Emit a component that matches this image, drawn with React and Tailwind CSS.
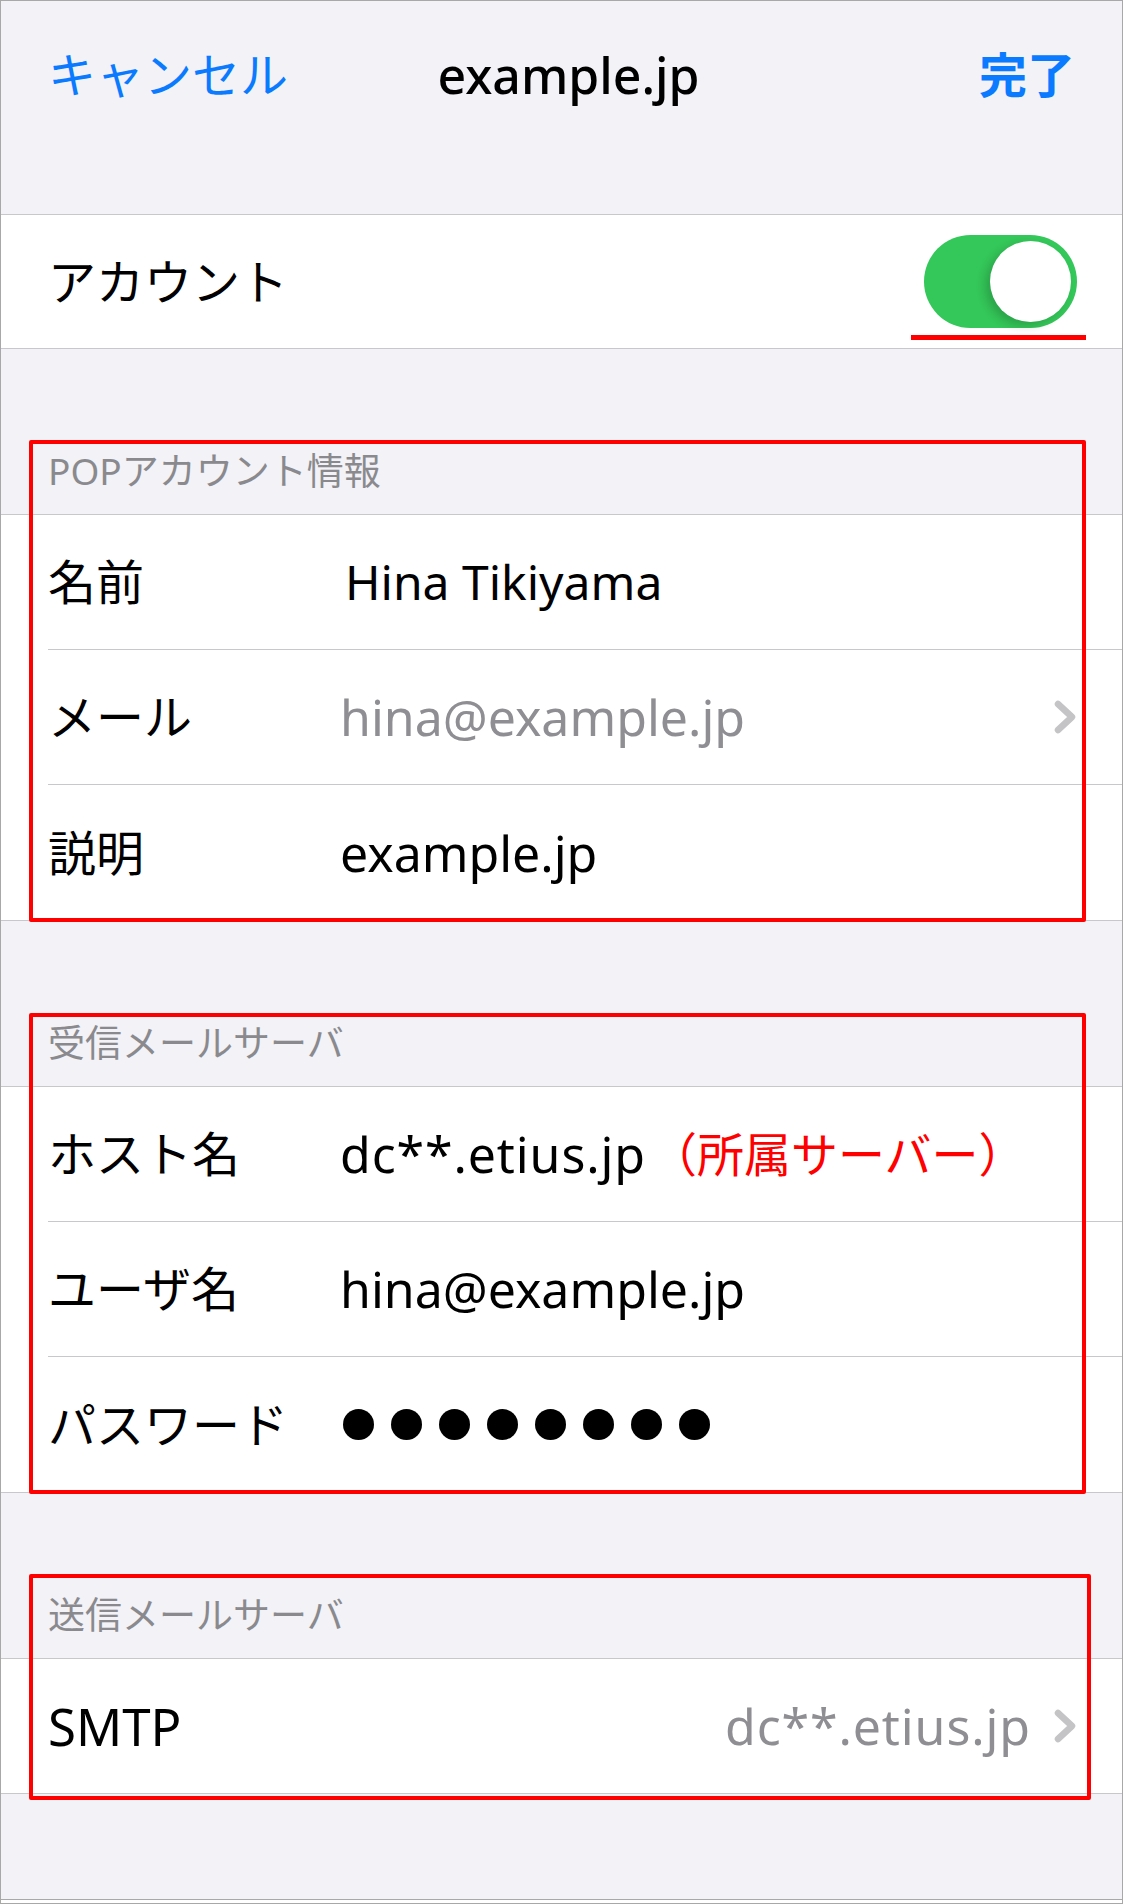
import React from "react";

const font = "font-['Noto_Sans','Noto_Sans_CJK_JP',sans-serif]";

function Chevron() {
  return (
    <svg width="22" height="34" viewBox="0 0 22 34" className="shrink-0">
      <path
        d="M4 4 L18 17 L4 30"
        fill="none"
        stroke="#c4c4c7"
        strokeWidth="6.5"
        strokeLinecap="round"
        strokeLinejoin="round"
      />
    </svg>
  );
}

function Row({ label, children, last }) {
  return (
    <div
      className={
        "ml-[47px] flex h-[135px] items-center pr-[46px] " +
        (last ? "h-[134px]" : "border-b border-[#c8c7cc]")
      }
    >
      <div className="w-[292px] shrink-0 text-[48px] leading-[60px] text-black">
        {label}
      </div>
      <div className="flex min-w-0 flex-1 items-center">{children}</div>
    </div>
  );
}

function Section({ title, box, children }) {
  return (
    <div className="relative">
      <div className="flex h-[165px] items-end pb-[20px] pl-[47px] text-[37px] leading-[47px] text-[#8a8a8e]">
        {title}
      </div>
      <div className="border-y border-[#c8c7cc] bg-white">{children}</div>
      {/* red annotation frame */}
      <div className={"pointer-events-none absolute rounded-[2px] border-[4px] border-[#ff0000] " + box} />
    </div>
  );
}

export default function App() {
  return (
    <div className={"w-[1125px] bg-white " + font}>
      <div className="w-[1123px] border-x border-t border-[#a8a8a8] bg-[#f2f2f7]">
        {/* Nav */}
        <div className="grid h-[214px] grid-cols-[1fr_auto_1fr] items-start border-b border-[#c8c7cc] px-[47px] pt-[44px] text-[48px] leading-[60px]">
          <div className="text-[#0a7aff]">キャンセル</div>
          <div className="ml-[14px] text-[50px] font-medium text-black">example.jp</div>
          <div className="text-right font-bold text-[#0a7aff]">完了</div>
        </div>

        {/* Account toggle */}
        <div className="relative flex h-[134px] items-center justify-between border-b border-[#c8c7cc] bg-white pl-[47px] pr-[45px]">
          <div className="text-[48px] leading-[60px] text-black">アカウント</div>
          <div className="flex h-[93px] w-[153px] items-center justify-end rounded-full bg-[#34c759] p-[6px]">
            <div className="h-[81px] w-[81px] rounded-full bg-white shadow-[-5px_4px_10px_rgba(0,0,0,0.18)]" />
          </div>
          <div className="absolute left-[910px] top-[120px] h-[5px] w-[175px] bg-[#ff0000]" />
        </div>

        <Section title="POPアカウント情報" box="left-[28px] top-[91px] h-[482px] w-[1057px]">
          <Row label="名前">
            <span className="pl-[5px] text-[48px] leading-[60px] text-black">Hina Tikiyama</span>
          </Row>
          <Row label="メール">
            <span className="flex-1 text-[50px] leading-[60px] text-[#8e8e93]">hina@example.jp</span>
            <Chevron />
          </Row>
          <Row label="説明" last>
            <span className="text-[50px] leading-[60px] text-black">example.jp</span>
          </Row>
        </Section>

        <Section title="受信メールサーバ" box="left-[28px] top-[92px] h-[481px] w-[1057px]">
          <Row label="ホスト名">
            <span className="text-[50px] leading-[60px] tracking-[0.9px] text-black">dc**.etius.jp</span>
            <span className="ml-[4px] text-[47px] leading-[60px] text-[#ff0000]">（所属サーバー）</span>
          </Row>
          <Row label="ユーザ名">
            <span className="text-[50px] leading-[60px] text-black">hina@example.jp</span>
          </Row>
          <Row label="パスワード" last>
            <div className="flex gap-[17px] pl-[3px]">
              {[0, 1, 2, 3, 4, 5, 6, 7].map((i) => (
                <span key={i} className="h-[31px] w-[31px] rounded-full bg-black" />
              ))}
            </div>
          </Row>
        </Section>

        <Section title="送信メールサーバ" box="left-[28px] top-[81px] h-[226px] w-[1062px]">
          <div className="ml-[47px] flex h-[134px] items-center pr-[46px]">
            <div className="text-[51px] leading-[60px] text-black">SMTP</div>
            <div className="ml-auto mr-[23px] text-[50px] leading-[60px] tracking-[0.9px] text-[#8e8e93]">dc**.etius.jp</div>
            <Chevron />
          </div>
        </Section>

        <div className="h-[105px]" />
        <div className="h-[4px] border-t border-[#a8a8a8] bg-white" />
        <div className="h-[2px] border-t border-[#a8a8a8] bg-white" />
      </div>
    </div>
  );
}
